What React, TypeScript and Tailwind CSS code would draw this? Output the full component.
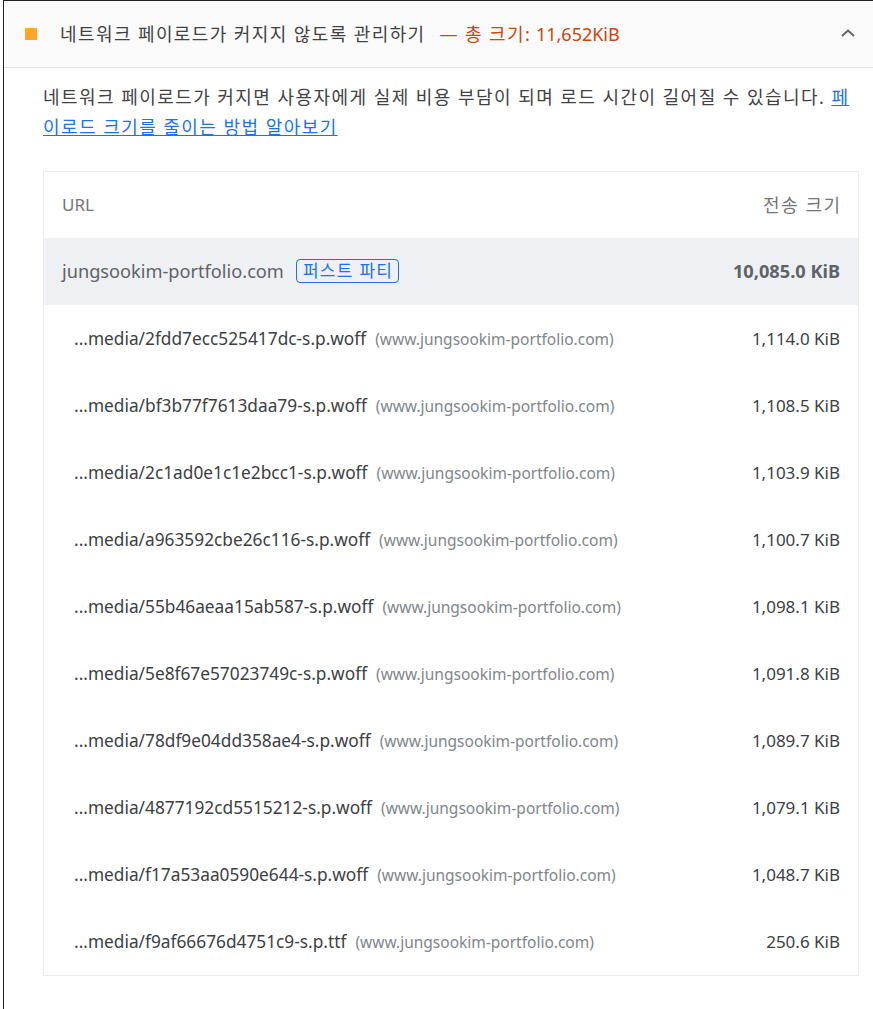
import React from "react";

const rows = [
  ["...media/2fdd7ecc525417dc-s.p.woff", "1,114.0 KiB"],
  ["...media/bf3b77f7613daa79-s.p.woff", "1,108.5 KiB"],
  ["...media/2c1ad0e1c1e2bcc1-s.p.woff", "1,103.9 KiB"],
  ["...media/a963592cbe26c116-s.p.woff", "1,100.7 KiB"],
  ["...media/55b46aeaa15ab587-s.p.woff", "1,098.1 KiB"],
  ["...media/5e8f67e57023749c-s.p.woff", "1,091.8 KiB"],
  ["...media/78df9e04dd358ae4-s.p.woff", "1,089.7 KiB"],
  ["...media/4877192cd5515212-s.p.woff", "1,079.1 KiB"],
  ["...media/f17a53aa0590e644-s.p.woff", "1,048.7 KiB"],
  ["...media/f9af66676d4751c9-s.p.ttf", "250.6 KiB"],
];

export default function App() {
  return (
    <div
      className="min-h-[1009px] bg-white pl-[3px]"
      style={{ fontFamily: '"Noto Sans", "Noto Sans CJK KR", sans-serif' }}
    >
      <div className="min-h-[1009px] border-l border-t border-[#202124]">
        <div className="flex h-[67px] items-center border-b border-[#e0e0e0] bg-[#fafafa] pl-[21px] pr-[17px]">
          <div className="h-[12px] w-[12px] bg-[#ffa629]" />
          <div className="ml-[23px] flex flex-1 items-center text-[18px] text-[#424242]">
            <span className="tracking-[1.4px]">네트워크 페이로드가 커지지 않도록 관리하기</span>
            <span className="ml-[14px] text-[#c9460c]">
              <span className="tracking-[1.4px]">— 총 크기:</span> 11,652KiB
            </span>
          </div>
          <svg width="16" height="10" viewBox="0 0 16 10" className="mt-[-2px]">
            <path d="M2 8 L8 2.5 L14 8" fill="none" stroke="#5f6368" strokeWidth="2" />
          </svg>
        </div>
        <div className="pl-[39px] pr-[14px]">
          <p className="mt-[14px] text-[18px] leading-[30px] tracking-[1.45px] text-[#424242]">
            네트워크 페이로드가 커지면 사용자에게 실제 비용 부담이 되며 로드 시간이 길어질 수 있습니다.{" "}
            <a href="#" className="text-[#1a73e8] underline">
              페이로드 크기를 줄이는 방법 알아보기
            </a>
          </p>
          <div className="mt-[29px] border border-[#ebebeb]">
            <div className="flex h-[66px] items-center justify-between px-[18px] text-[17px] text-[#757575]">
              <span>URL</span>
              <span className="mr-[-1.5px] text-[18px] tracking-[1.5px]">전송 크기</span>
            </div>
            <div className="flex h-[67px] items-center justify-between bg-[#eef0f3] px-[18px] text-[18.2px]">
              <div className="flex items-center">
                <span className="text-[#5f6368]">jungsookim-portfolio.com</span>
                <span className="ml-[12px] rounded-[4px] border border-[#1a73e8] pl-[6px] pr-[5px] text-[17px] leading-[22px] tracking-[1.3px] text-[#1a73e8]">
                  퍼스트 파티
                </span>
              </div>
              <span className="font-bold text-[#5f6368]">10,085.0 KiB</span>
            </div>
            {rows.map(([url, size]) => (
              <div key={url} className="flex h-[67px] items-center justify-between pl-[30px] pr-[18px]">
                <div className="flex items-baseline">
                  <span className="text-[17.3px] text-[#3c4043]">{url}</span>
                  <span className="ml-[9px] text-[15.5px] text-[#80868b]">(www.jungsookim-portfolio.com)</span>
                </div>
                <span className="text-[17px] text-[#3c4043]">{size}</span>
              </div>
            ))}
          </div>
        </div>
      </div>
    </div>
  );
}
